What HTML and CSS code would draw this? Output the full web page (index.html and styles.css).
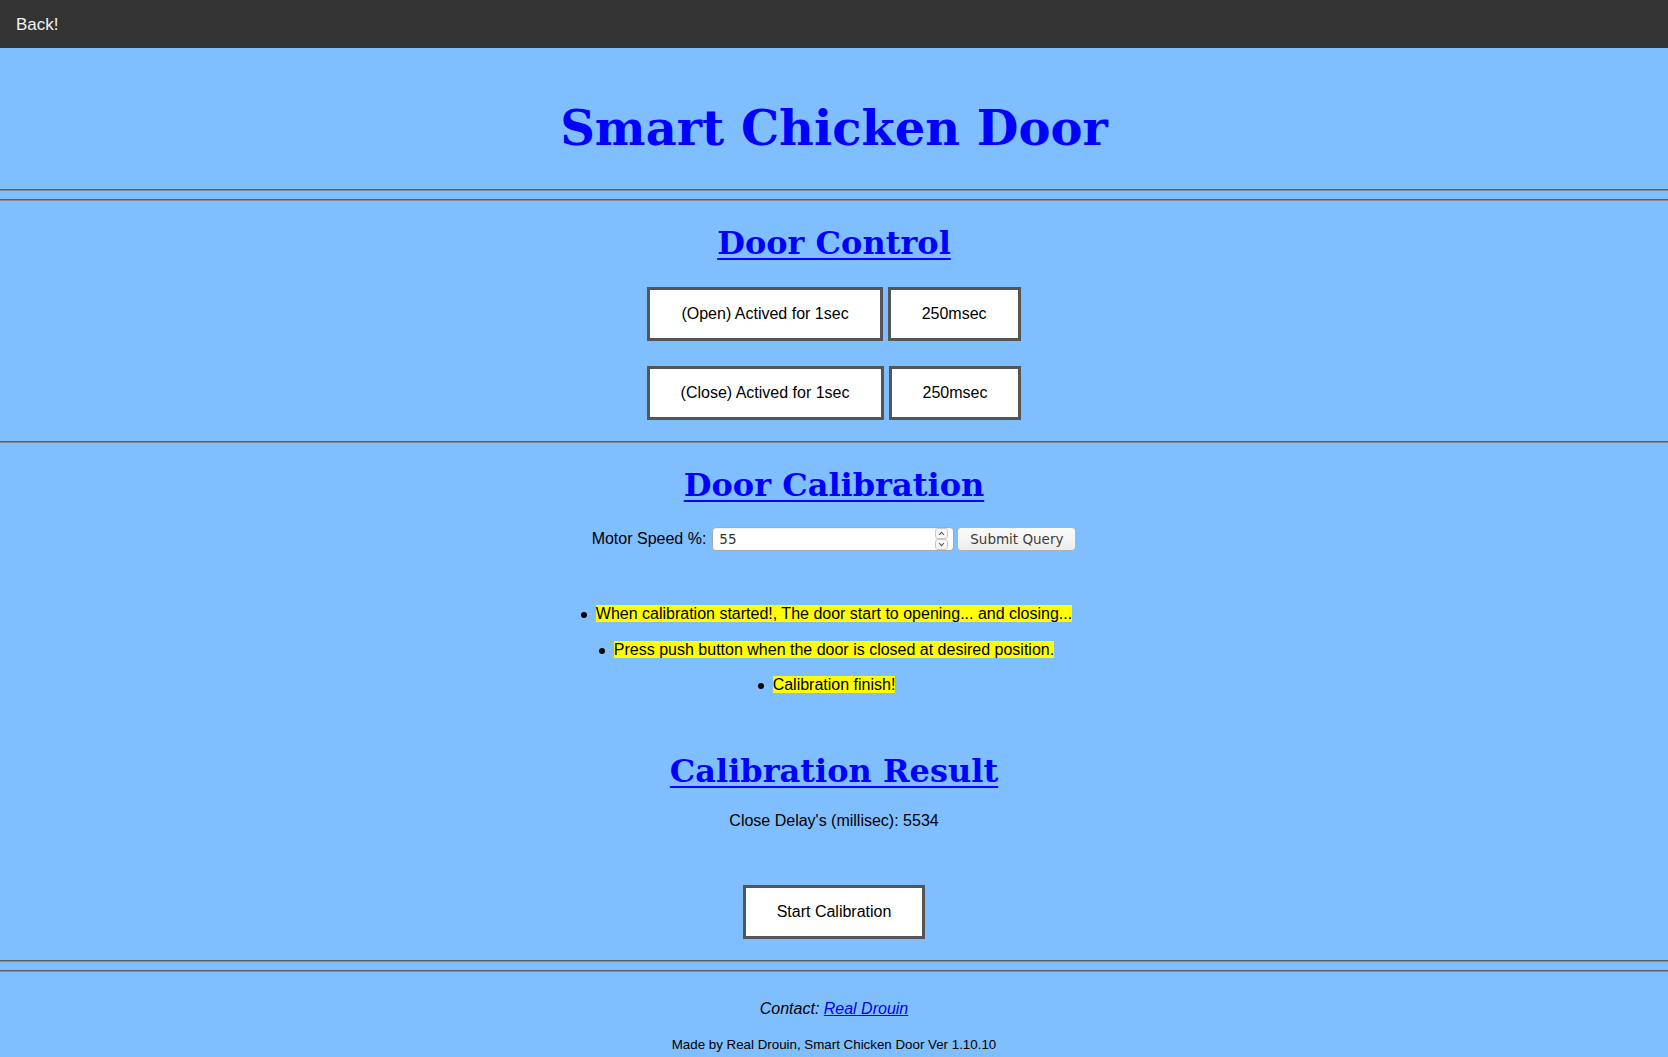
FILE: index.html
```html
<!DOCTYPE html>
<html>
<head>
<meta charset="utf-8">
<title>Smart Chicken Door</title>
<link rel="stylesheet" href="styles.css">
</head>
<body>
<div class="topnav"><a href="#">Back!</a></div>

<h1 class="title">Smart Chicken Door</h1>
<hr class="rule">
<hr class="rule rule-second">

<h2 class="section-title first"><a href="#">Door Control</a></h2>
<div class="btn-row">
  <button class="btn">(Open) Actived for 1sec</button>
  <button class="btn">250msec</button>
</div>
<div class="btn-row second">
  <button class="btn">(Close) Actived for 1sec</button>
  <button class="btn">250msec</button>
</div>

<hr class="rule rule-mid">

<h2 class="section-title calib"><a href="#">Door Calibration</a></h2>
<form class="speed-form">
  <label class="speed-label">Motor Speed %:</label>
  <span class="num-wrap">
    <input class="num-input" type="text" value="55">
    <span class="spinner">
      <svg width="13" height="22" viewBox="0 0 13 22">
        <rect x="0.5" y="0.5" width="12" height="10" rx="2.5" fill="#f7f7f7" stroke="#c9c9c6"/>
        <rect x="0.5" y="11.5" width="12" height="10" rx="2.5" fill="#f7f7f7" stroke="#c9c9c6"/>
        <path d="M4 7 L6.5 4.3 L9 7" fill="none" stroke="#555" stroke-width="1.1"/>
        <path d="M4 15 L6.5 17.7 L9 15" fill="none" stroke="#555" stroke-width="1.1"/>
      </svg>
    </span>
  </span>
  <input class="submit-btn" type="submit" value="Submit Query">
</form>

<ul class="steps">
  <li><span class="step"><mark>When calibration started!, The door start to opening... and closing...</mark></span></li>
  <li><span class="step"><mark>Press push button when the door is closed at desired position.</mark></span></li>
  <li><span class="step"><mark>Calibration finish!</mark></span></li>
</ul>

<h2 class="section-title result"><a href="#">Calibration Result</a></h2>
<p class="delay">Close Delay's (millisec): 5534</p>
<div class="btn-row start">
  <button class="btn">Start Calibration</button>
</div>

<hr class="rule rule-bottom">
<hr class="rule rule-second">

<p class="contact">Contact: <a href="#">Real Drouin</a></p>
<p class="made">Made by Real Drouin, Smart Chicken Door Ver 1.10.10</p>
</body>
</html>
```

FILE: styles.css
```css
html, body {
  margin: 0;
  padding: 0;
}

body {
  background: #80bfff;
  font-family: "Liberation Sans", Arial, sans-serif;
  font-size: 16px;
  color: #000;
  text-align: center;
}

.topnav {
  background: #333;
  height: 48px;
  text-align: left;
}

.topnav a {
  display: inline-block;
  color: #f2f2f2;
  text-decoration: none;
  font-size: 17px;
  line-height: 20px;
  padding: 15px 16px 13px;
}

.title {
  font-family: "DejaVu Serif", serif;
  font-weight: bold;
  font-size: 48px;
  line-height: 56px;
  color: #0000ff;
  margin: 52px 0 33px;
}

.rule {
  display: block;
  height: 0;
  margin: 0;
  border: 0;
  border-top: 1px solid #5f5f5f;
  border-bottom: 1px solid #8a8a8a;
}

.rule-second {
  margin-top: 8px;
}

.rule-mid {
  margin-top: 21px;
}

.rule-bottom {
  margin-top: 21px;
}

.section-title {
  font-family: "DejaVu Serif", serif;
  font-weight: bold;
  font-size: 32px;
  line-height: 37px;
  margin: 0;
}

.section-title a {
  color: #0000ff;
  text-decoration: underline;
  text-decoration-thickness: 2px;
  text-underline-offset: 4px;
}

.section-title.first {
  margin-top: 23.5px;
}

.section-title.calib {
  margin-top: 24px;
}

.section-title.result {
  margin-top: 59px;
}

.btn-row {
  display: flex;
  justify-content: center;
  gap: 5px;
  margin-top: 25.5px;
}

.btn-row.second {
  margin-top: 25px;
}

.btn-row.start {
  margin-top: 55px;
}

.btn {
  background: #fff;
  color: #000;
  border: 3px solid #555;
  font-family: "Liberation Sans", Arial, sans-serif;
  font-size: 16px;
  line-height: 18px;
  padding: 15px 31px;
  margin: 0;
  cursor: pointer;
}

.speed-form {
  display: flex;
  justify-content: center;
  align-items: center;
  height: 24px;
  margin: 23px 0 0;
}

.speed-label {
  font-size: 16px;
  margin-right: 6px;
}

.num-wrap {
  position: relative;
  display: inline-block;
  width: 242px;
  height: 24px;
}

.num-input {
  box-sizing: border-box;
  width: 242px;
  height: 24px;
  margin: 0;
  padding: 0 0 0 6px;
  border: 1px solid #a9a9a6;
  border-radius: 4px;
  background: #fff;
  box-shadow: inset 0 1px 1px rgba(0, 0, 0, 0.06);
  font-family: "DejaVu Sans", sans-serif;
  font-size: 13.5px;
  color: #333;
}

.spinner {
  position: absolute;
  right: 6px;
  top: 1px;
  width: 13px;
  height: 22px;
}

.spinner svg {
  display: block;
}

.submit-btn {
  box-sizing: border-box;
  width: 119px;
  height: 24px;
  margin: 0 0 0 3px;
  padding: 0;
  border: 1px solid #b4b4b1;
  border-radius: 4px;
  background: linear-gradient(#fbfbfb, #ededec);
  font-family: "DejaVu Sans", sans-serif;
  font-size: 13.5px;
  color: #3c3c3c;
}

.steps {
  list-style: none;
  margin: 54px 0 0;
  padding: 0;
}

.steps li {
  line-height: 18px;
  margin-bottom: 17.5px;
}

.steps li:last-child {
  margin-bottom: 0;
}

.step {
  position: relative;
}

.step::before {
  content: "";
  position: absolute;
  right: 100%;
  top: 7px;
  width: 6px;
  height: 6px;
  margin-right: 9px;
  border-radius: 50%;
  background: #000;
}

.steps mark {
  background: #ffff00;
  color: #000;
}

.delay {
  margin: 22px 0 0;
  line-height: 18px;
}

.contact {
  font-style: italic;
  line-height: 18px;
  margin: 28px 0 0;
}

.contact a {
  color: #0000ee;
}

.made {
  font-size: 13.33px;
  line-height: 15px;
  margin: 19px 0 0;
}
```
